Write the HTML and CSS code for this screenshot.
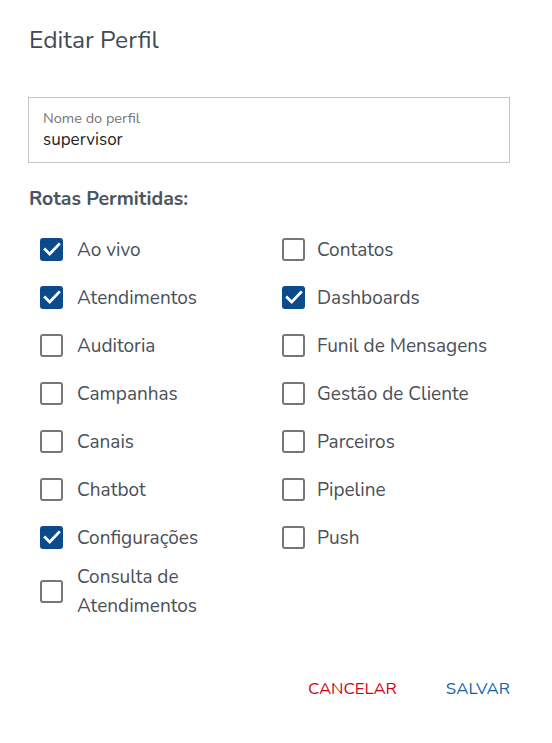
FILE: index.html
```html
<!DOCTYPE html>
<html lang="pt-BR">
<head>
<meta charset="utf-8">
<title>Editar Perfil</title>
<link rel="stylesheet" href="styles.css">
</head>
<body>
<div class="dialog">
  <h2 class="title">Editar Perfil</h2>
  <div class="field">
    <label class="field-label">Nome do perfil</label>
    <div class="field-value">supervisor</div>
  </div>
  <h3 class="section">Rotas Permitidas:</h3>
  <div class="grid">
    <div class="col">
      <div class="item"><span class="box checked"><svg viewBox="0 0 24 24"><path d="M4.5 12.5l5 5L19.5 7"/></svg></span><span class="label">Ao vivo</span></div>
      <div class="item"><span class="box checked"><svg viewBox="0 0 24 24"><path d="M4.5 12.5l5 5L19.5 7"/></svg></span><span class="label">Atendimentos</span></div>
      <div class="item"><span class="box"></span><span class="label">Auditoria</span></div>
      <div class="item"><span class="box"></span><span class="label">Campanhas</span></div>
      <div class="item"><span class="box"></span><span class="label">Canais</span></div>
      <div class="item"><span class="box"></span><span class="label">Chatbot</span></div>
      <div class="item"><span class="box checked"><svg viewBox="0 0 24 24"><path d="M4.5 12.5l5 5L19.5 7"/></svg></span><span class="label">Configurações</span></div>
      <div class="item"><span class="box"></span><span class="label">Consulta de<br>Atendimentos</span></div>
    </div>
    <div class="col">
      <div class="item"><span class="box"></span><span class="label">Contatos</span></div>
      <div class="item"><span class="box checked"><svg viewBox="0 0 24 24"><path d="M4.5 12.5l5 5L19.5 7"/></svg></span><span class="label">Dashboards</span></div>
      <div class="item"><span class="box"></span><span class="label">Funil de Mensagens</span></div>
      <div class="item"><span class="box"></span><span class="label">Gestão de Cliente</span></div>
      <div class="item"><span class="box"></span><span class="label">Parceiros</span></div>
      <div class="item"><span class="box"></span><span class="label">Pipeline</span></div>
      <div class="item"><span class="box"></span><span class="label">Push</span></div>
    </div>
  </div>
  <div class="actions">
    <button class="btn cancel">Cancelar</button>
    <button class="btn save">Salvar</button>
  </div>
</div>
</body>
</html>
```
FILE: styles.css
```css
* { box-sizing: border-box; }
html, body { margin: 0; background: #fff; }
body {
  font-family: "Nunito", "Noto Sans", "Open Sans", sans-serif;
  color: #4a5058;
}
.dialog {
  width: 552px;
  padding: 24px 42px 0 28px;
}
.title {
  margin: 0 0 0 1px;
  font-size: 24.6px;
  font-weight: 400;
  line-height: 32px;
  color: #434a53;
}
.field {
  margin-top: 41px;
  height: 66px;
  border: 1px solid #c4c4c4;
  padding: 11px 14px 0;
}
.field-label {
  display: block;
  font-size: 14.5px;
  line-height: 19px;
  color: #757575;
}
.field-value {
  font-size: 17px;
  line-height: 24px;
  color: #222;
}
.section {
  margin: 22px 0 0 1px;
  font-size: 19.5px;
  font-weight: 700;
  line-height: 28px;
  color: #4a5560;
}
.grid {
  display: grid;
  grid-template-columns: 242px 1fr;
  padding-left: 12px;
  margin-top: 12px;
}
.col { display: flex; flex-direction: column; }
.item {
  display: flex;
  align-items: center;
  min-height: 48px;
  gap: 14px;
}
.col + .col .item { gap: 12px; }
.box {
  flex: none;
  width: 23px;
  height: 23px;
  border: 2.5px solid #777;
  border-radius: 3px;
  display: flex;
  align-items: center;
  justify-content: center;
}
.box.checked {
  background: #0b4a8b;
  border-color: #0b4a8b;
}
.box svg {
  width: 22px;
  height: 22px;
  flex: none;
  fill: none;
  stroke: #fff;
  stroke-width: 3;
  stroke-linecap: square;
}
.label {
  font-size: 19px;
  line-height: 29px;
  color: #4a5058;
  padding-top: 2px;
}
.actions {
  display: flex;
  justify-content: flex-end;
  gap: 49px;
  margin-top: 56px;
}
.btn {
  border: 0;
  background: none;
  padding: 0;
  font-family: inherit;
  font-size: 16.8px;
  text-transform: uppercase;
  line-height: 24px;
  cursor: pointer;
}
.cancel { color: #d0021b; }
.save { color: #1565a8; }
```
